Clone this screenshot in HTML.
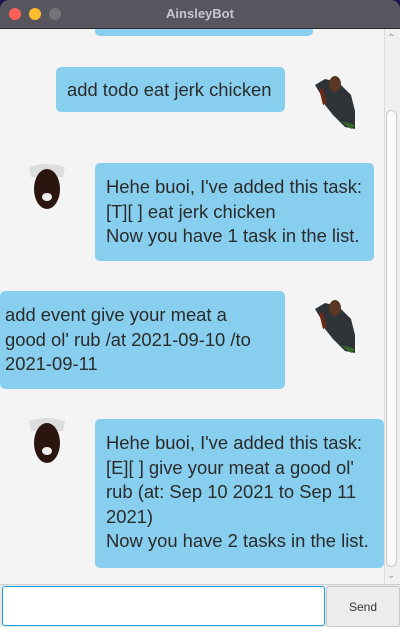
<!DOCTYPE html>
<html><head><style>
*{margin:0;padding:0;box-sizing:border-box}
body{width:400px;height:627px;overflow:hidden;background:#1c1450;font-family:"Liberation Sans",sans-serif;position:relative}
.win{position:absolute;left:0;top:0;width:400px;height:627px;background:#f4f4f4;border-radius:10px 10px 0 0;overflow:hidden}
.title{position:absolute;z-index:5;left:0;top:0;width:400px;height:29px;background:#57555e;border-bottom:1px solid #2a2a2a;color:#c8c6cc;font-weight:bold;font-size:13px;text-align:center;line-height:28px}
.dot{position:absolute;top:8px;width:12px;height:12px;border-radius:50%}
.b{position:absolute;background:#88cfef;border-radius:5px;color:#2b2b2b;font-size:18.4px;line-height:24.5px;padding:0 11px;white-space:nowrap;overflow:hidden}
.sb{position:absolute;left:384px;top:29px;width:16px;height:556px;background:#f0f0f0;border-left:1px solid #ddd}
.thumb{position:absolute;left:386px;top:110px;width:11px;height:457px;background:#fafafa;border:1px solid #c9c9c9;border-radius:6px}
.av{position:absolute}
</style></head><body>
<div class="win">
<div class="title">AinsleyBot
<div class="dot" style="left:9px;background:#fe5f57"></div>
<div class="dot" style="left:29px;background:#febc2e"></div>
<div class="dot" style="left:49px;background:#76747b"></div>
</div>
<div class="b" style="left:95px;top:10px;width:218px;height:26px"></div>
<div class="b" style="left:56px;top:67px;width:229px;height:45px;line-height:45px">add todo eat jerk chicken</div>
<div class="b" style="left:95px;top:163px;width:279px;height:98px;padding-top:12px">Hehe buoi, I've added this task:<br>[T][ ] eat jerk chicken<br>Now you have 1 task in the list.</div>
<div class="b" style="left:0;top:291px;width:285px;height:98px;padding-top:12px;padding-left:5px">add event give your meat a<br>good ol' rub /at 2021-09-10 /to<br>2021-09-11</div>
<div class="b" style="left:95px;top:419px;width:289px;height:149px;padding-top:12px">Hehe buoi, I've added this task:<br>[E][ ] give your meat a good ol'<br>rub (at: Sep 10 2021 to Sep 11<br>2021)<br>Now you have 2 tasks in the list.</div>

<svg class="av" style="left:311px;top:71px" width="48" height="60" viewBox="0 0 48 60"><path d="M4 14 L14 8 L22 10 L30 14 L40 24 L44 40 L44 58 L34 56 L22 44 L14 34 L10 24 Z" fill="#2e3338"/><ellipse cx="24" cy="13" rx="6" ry="8" fill="#5a3523"/><path d="M8 18 L12 34 L16 32 L12 18Z" fill="#6b2a18"/><path d="M30 50 L40 58 L44 54Z" fill="#3a6a2a"/></svg>
<svg class="av" style="left:311px;top:295px" width="48" height="60" viewBox="0 0 48 60"><path d="M4 14 L14 8 L22 10 L30 14 L40 24 L44 40 L44 58 L34 56 L22 44 L14 34 L10 24 Z" fill="#2e3338"/><ellipse cx="24" cy="13" rx="6" ry="8" fill="#5a3523"/><path d="M8 18 L12 34 L16 32 L12 18Z" fill="#6b2a18"/><path d="M30 50 L40 58 L44 54Z" fill="#3a6a2a"/></svg>
<svg class="av" style="left:27px;top:163px" width="40" height="50" viewBox="0 0 40 50"><path d="M2 4 Q20 -2 38 4 L36 14 L4 14Z" fill="#ddd"/><ellipse cx="20" cy="26" rx="13" ry="20" fill="#2a160e"/><ellipse cx="20" cy="34" rx="5" ry="4" fill="#eee"/></svg>
<svg class="av" style="left:27px;top:417px" width="40" height="50" viewBox="0 0 40 50"><path d="M2 4 Q20 -2 38 4 L36 14 L4 14Z" fill="#ddd"/><ellipse cx="20" cy="26" rx="13" ry="20" fill="#2a160e"/><ellipse cx="20" cy="34" rx="5" ry="4" fill="#eee"/></svg>

<div class="sb"></div>
<div class="thumb"></div>
<div style="position:absolute;left:387px;top:33px;font-size:10px;color:#999">&#8963;</div>
<div style="position:absolute;left:387px;top:570px;font-size:10px;color:#999">&#8964;</div>
<div style="position:absolute;left:0;top:584px;width:400px;height:43px;background:#e8e8e8;border-top:1px solid #d0d0d0"></div>
<div style="position:absolute;left:2px;top:586px;width:323px;height:40px;background:#fff;border:1.5px solid #1aa0dd;border-radius:3px"></div>
<div style="position:absolute;left:326px;top:586px;width:74px;height:41px;background:#ececec;border:1px solid #c8c8c8;border-radius:3px;font-size:12px;color:#333;text-align:center;line-height:40px">Send</div>
</div>
</body></html>
